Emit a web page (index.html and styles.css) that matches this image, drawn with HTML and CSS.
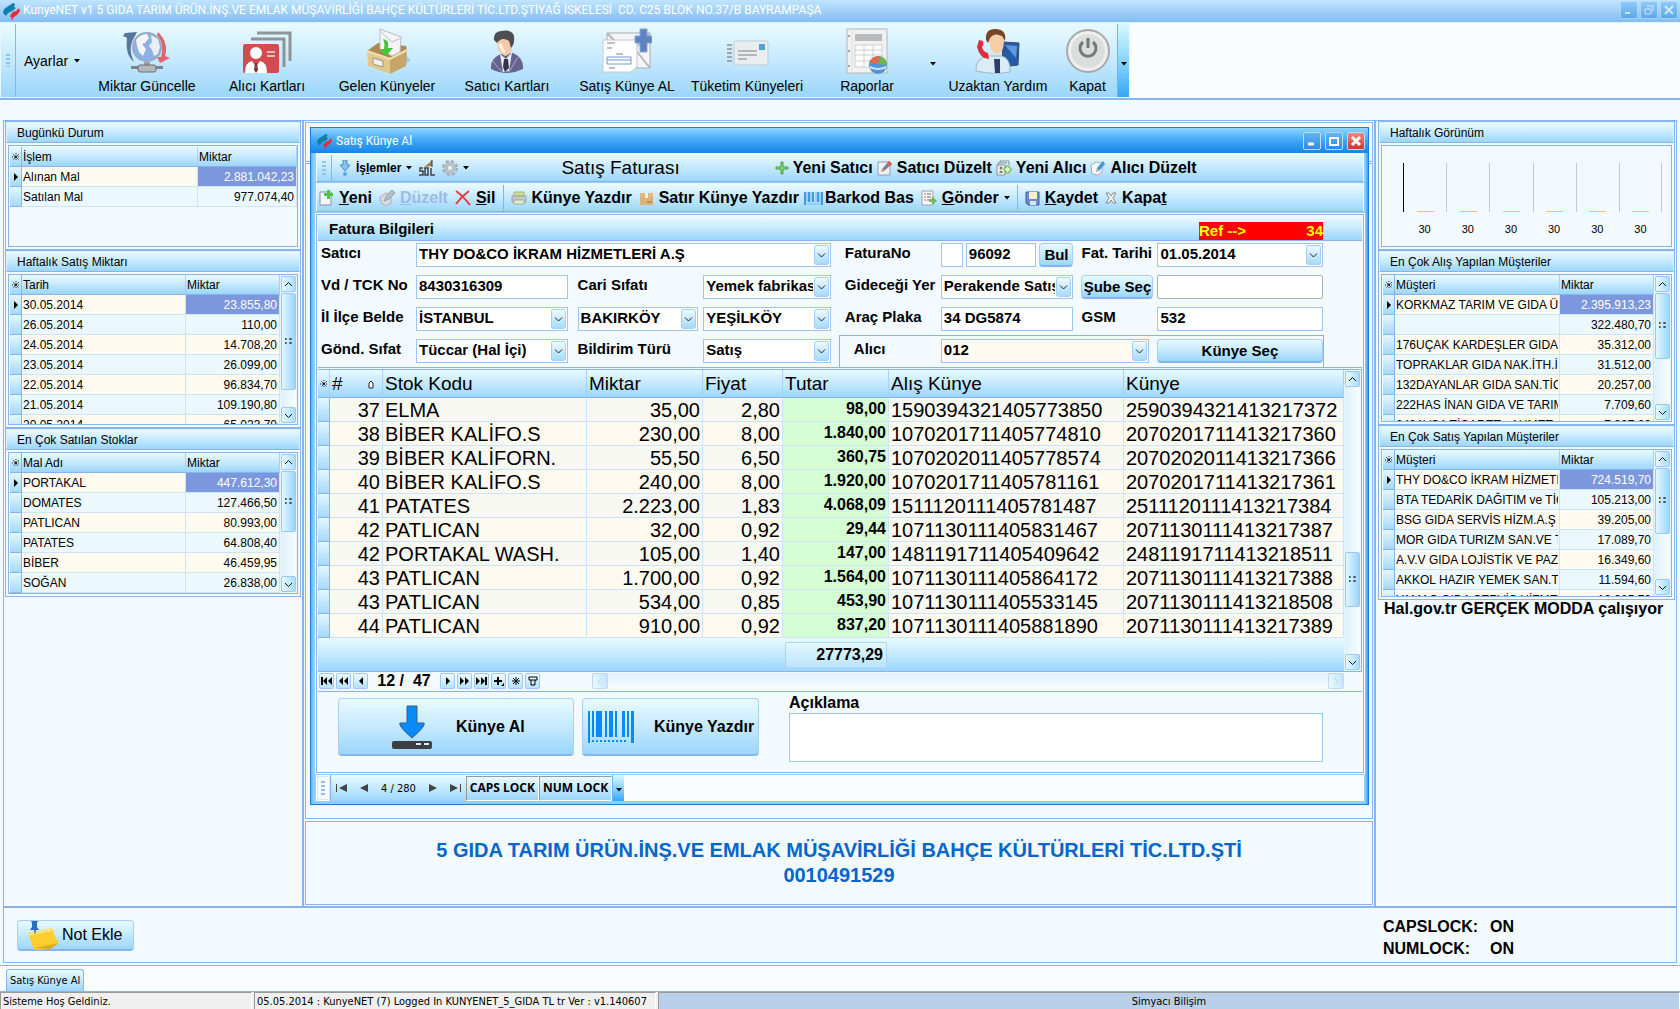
FILE: index.html
```html
<!DOCTYPE html>
<html lang="tr">
<head>
    <meta charset="UTF-8">
    <meta name="viewport" content="width=device-width, initial-scale=1.0">
    <title>KunyeNET v1</title>
    <link rel="stylesheet" href="styles.css">
</head>
<body>
    <!-- shared shapes -->
    <svg class="defs" width="0" height="0" aria-hidden="true">
        <symbol id="logo" viewBox="0 0 18 18">
            <path d="M1 11Q1 7 5 5L11 1L13 2L12 5L14 6Q10 10 6 11L4 14Z" fill="#0d7fae"/>
            <path d="M8 15L9 12Q11 9 14 9L17 6L18 9Q16 13 12 15L10 18L9 17L10 15Z" fill="#ee2a34"/>
        </symbol>
        <symbol id="star" viewBox="0 0 8 8">
            <path d="M4 0V8M0 4H8M1 1L7 7M7 1L1 7" stroke="#222" stroke-width="1" stroke-dasharray="1 1" fill="none"/>
            <rect x="3" y="3" width="2" height="2" fill="#222"/>
        </symbol>
        <symbol id="up" viewBox="0 0 9 9"><path d="M1 6L4.500 2.500L8 6" stroke="#111" fill="none"/></symbol>
        <symbol id="down" viewBox="0 0 9 9"><path d="M1 3L4.500 6.500L8 3" stroke="#111" fill="none"/></symbol>
        <symbol id="grip" viewBox="0 0 8 8"><path d="M0 1h3M5 1h3M0 5h3M5 5h3M0 0v3M5 0v3M0 4v3M5 4v3" stroke="#222" stroke-dasharray="2 1" fill="none"/></symbol>
        <symbol id="play" viewBox="0 0 6 8"><path d="M1 0L5 4L1 8Z" fill="#000"/></symbol>
        <symbol id="drop" viewBox="0 0 6 4"><path d="M0 0H6L3 3.500Z" fill="#000"/></symbol>
    </svg>

    <header class="titlebar">
        <svg class="logo" width="18" height="18"><use href="#logo"/></svg>
        <span class="title-text">KunyeNET v1 5 GIDA TARIM ÜRÜN.İNŞ.VE EMLAK MÜŞAVİRLİĞİ BAHÇE KÜLTÜRLERİ TİC.LTD.ŞTİYAĞ İSKELESİ&nbsp; CD. C25 BLOK NO.37/B BAYRAMPAŞA</span>
        <button class="win-btn faded" aria-label="Küçült"><svg width="10" height="10"><path d="M1 8H6" stroke="#fff" stroke-width="2"/></svg></button>
        <button class="win-btn faded" aria-label="Geri yükle"><svg width="10" height="10"><path d="M3 1H9V6M1 4H7V9H1Z" stroke="#fff" fill="none"/></svg></button>
        <button class="win-btn faded" aria-label="Kapat"><svg width="10" height="10"><path d="M1 1L9 9M9 1L1 9" stroke="#fff" stroke-width="2"/></svg></button>
    </header>

    <nav class="ribbon">
        <div class="ribbon-bar">
            <span class="dots"></span>
            <button class="ayarlar">Ayarlar <svg width="6" height="4"><use href="#drop"/></svg></button>
            <button class="big">
                <svg width="50" height="44" viewBox="0 0 50 44">
                    <path d="M3 3L15 2L13 6Q5 18 12 32Q3 25 5 8L1 6Z" fill="#58759c"/>
                    <path d="M36 2Q47 13 43 26L48 28L38 33L35 27L39 27Q43 14 35 5Z" fill="#e0646a"/>
                    <circle cx="25" cy="17" r="15" fill="#9aa8bb"/>
                    <circle cx="25" cy="17" r="13.500" fill="#8db1e4"/>
                    <path d="M14 10Q18 4 25 4L27 8L23 13L20 14L24 19L21 26L17 22L15 16Z" fill="#f2f6fb"/>
                    <path d="M29 5L36 9L38 17L36 24L32 26L30 20L27 16L30 12Z" fill="#e6eef8"/>
                    <path d="M22 32H28V37H22Z" fill="#9b9ea2"/>
                    <path d="M9 36H18V39H9ZM32 36H41V39H32Z" fill="#7f8387"/>
                    <rect x="16" y="35" width="18" height="7" rx="2" fill="#b3b6ba" stroke="#6d7074"/>
                </svg>
                Miktar Güncelle
            </button>
            <button class="big">
                <svg width="50" height="44" viewBox="0 0 50 44">
                    <path d="M15 3H48V31" stroke="#8f9498" stroke-width="3" fill="none"/>
                    <path d="M9 9H42V37" stroke="#8f9498" stroke-width="3" fill="none"/>
                    <rect x="1" y="14" width="36" height="29" rx="2" fill="#d14b4f"/>
                    <circle cx="14" cy="23" r="6" fill="#fff"/>
                    <path d="M3 43Q3 32 10 31L14 37L18 31Q25 32 25 43Z" fill="#fff"/>
                    <path d="M13 33H15L16 40L14 43L12 40Z" fill="#7b3b3e"/>
                    <path d="M25 22H33M25 26H33" stroke="#f2b9ba" stroke-width="2"/>
                </svg>
                Alıcı Kartları
            </button>
            <button class="big">
                <svg width="50" height="46" viewBox="0 0 50 46">
                    <path d="M30 45L49 32L41 25Z" fill="#8bb5d5" opacity=".6"/>
                    <path d="M5 23L16 15L44 18L45 22L28 30Z" fill="#a88a52"/>
                    <path d="M18 1L39 9L38 24L30 28L18 21Z" fill="#f4f5f7" stroke="#c3b9c2"/>
                    <path d="M18 3L30 14L39 10" stroke="#b9bec7" fill="none"/>
                    <path d="M21 11Q28 12 26 20H31L24 28L18 21H22Q23 15 21 11Z" fill="#45c53a"/>
                    <path d="M5 23L28 31V46L6 38Z" fill="#e3c88c"/>
                    <path d="M28 31L45 22L44 38L28 46Z" fill="#c7a768"/>
                    <path d="M5 23L28 31L45 22" stroke="#f2dfae" stroke-width="2" fill="none"/>
                    <path d="M11 30L21 33V39L11 36Z" fill="#f0f1ee" stroke="#9a9786"/>
                </svg>
                Gelen Künyeler
            </button>
            <button class="big">
                <svg width="40" height="44" viewBox="0 0 40 44">
                    <path d="M4 39Q3 28 14 24L26 23Q37 28 36 39Q20 47 4 39Z" fill="#65648e"/>
                    <path d="M13 24L19 29L25 22L22 41L16 42Z" fill="#eceff6"/>
                    <path d="M17 29H21L22 38L18 42L16 37Z" fill="#34344a"/>
                    <path d="M6 31Q11 39 16 42M31 27L22 42" stroke="#a8a7c5" fill="none"/>
                    <path d="M12 9Q17 4 24 8L25 17Q24 25 18 26Q10 22 10 14Z" fill="#f3c9a8"/>
                    <path d="M7 10Q6 2 14 1Q25 -1 27 6Q28 14 24 18L22 11Q15 6 10 13Z" fill="#4d4e51"/>
                    <path d="M13 14Q15 20 18 22" stroke="#fff3e5" stroke-width="3" fill="none"/>
                </svg>
                Satıcı Kartları
            </button>
            <button class="big">
                <svg width="50" height="46" viewBox="0 0 50 46">
                    <path d="M5 5H48V40H5Z" fill="#f5f5f6" stroke="#a9acb1"/>
                    <path d="M5 5L26 27L48 5M48 40L32 20" stroke="#b6b8bd" stroke-width="2" fill="none"/>
                    <path d="M1 12H35V39L29 44H1Z" fill="#fdfdfd" stroke="#c5c9cf"/>
                    <path d="M5 15H13M5 20H10M14 26H21M7 40H13" stroke="#7d8188" stroke-width="1"/>
                    <path d="M5 29H29V36H5ZM5 32H29" stroke="#7798d6" fill="none"/>
                    <path d="M38 1H45V8H50V15H45V24H38V15H33V8H38Z" fill="#5e83c1" stroke="#86a6d8"/>
                </svg>
                Satış Künye AL
            </button>
            <button class="big">
                <svg width="44" height="44" viewBox="0 0 44 44">
                    <path d="M2 15H7M2 19H7M2 23H7M2 27H7M2 31H7" stroke="#9fa6ac" stroke-width="2"/>
                    <rect x="9" y="11" width="34" height="24" rx="2" fill="#e9edf0" stroke="#c0cbd3"/>
                    <path d="M13 21H32M13 25H32M13 29H22" stroke="#b4b7b9" stroke-width="2"/>
                    <rect x="34" y="14" width="6" height="6" fill="#53a4d2"/>
                </svg>
                Tüketim Künyeleri
            </button>
            <button class="big">
                <svg width="44" height="46" viewBox="0 0 44 46">
                    <path d="M2 1H42V45H2Z" fill="#f1f1f1" stroke="#b5b6b8"/>
                    <path d="M7 1V45" stroke="#dddedf"/>
                    <circle cx="4" cy="8" r="1" fill="#888"/><circle cx="4" cy="23" r="1" fill="#888"/><circle cx="4" cy="38" r="1" fill="#888"/>
                    <rect x="10" y="6" width="27" height="7" fill="#b9babb"/>
                    <path d="M10 17H37V39H10ZM10 22H37M10 27H37M10 33H37M19 17V39M28 17V39" stroke="#cecfd0" fill="#fcfcfc"/>
                    <circle cx="33" cy="37" r="9" fill="#4f93de"/>
                    <path d="M33 36L24 35Q26 28 35 28Z" fill="#df6b4d"/>
                    <path d="M33 36L36 28Q42 31 42 37Z" fill="#6eb64b"/>
                    <path d="M25 39Q33 43 41 39" stroke="#cfe4fa" stroke-width="2" fill="none"/>
                </svg>
                Raporlar
            </button>
            <button class="split" aria-label="Rapor listesi"><svg width="6" height="4"><use href="#drop"/></svg></button>
            <button class="big">
                <svg width="46" height="46" viewBox="0 0 46 46">
                    <path d="M28 14L44 15L43 37L27 39Z" fill="#245ca9" stroke="#3b4a66"/>
                    <path d="M30 17L42 18L41 30Z" fill="#5b98dc"/>
                    <path d="M1 43Q0 31 12 28H27Q36 31 35 44Q18 47 1 43Z" fill="#dcebf4" stroke="#98b7c9"/>
                    <path d="M19 31H25V45H20Z" fill="#2d3e6b"/>
                    <path d="M14 9Q14 3 22 3Q29 4 29 12Q29 25 22 26Q14 24 14 9Z" fill="#f5cda8"/>
                    <path d="M11 12Q10 1 20 1Q32 1 30 13L27 8Q19 4 15 10L13 15Z" fill="#774426"/>
                    <path d="M4 12L8 13Q9 17 7 19Q8 24 13 25L14 31Q5 31 2 19Z" fill="#e02c3b"/>
                </svg>
                Uzaktan Yardım
            </button>
            <button class="big kapat">
                <svg width="46" height="46" viewBox="0 0 46 46">
                    <circle cx="23" cy="23" r="22" fill="#a7a8a9"/>
                    <circle cx="23" cy="23" r="20" fill="#efefef"/>
                    <circle cx="23" cy="23" r="17" fill="#dcdddd"/>
                    <path d="M18 14A8 8 0 1 0 28 14M23 10V20" stroke="#76797c" stroke-width="3" fill="none"/>
                </svg>
                Kapat
            </button>
            <button class="more" aria-label="Diğer"><svg width="6" height="4"><use href="#drop"/></svg></button>
        </div>
    </nav>

    <main class="workspace">
        <aside class="side">
            <section class="group">
                <h2>Bugünkü Durum</h2>
                <div class="frame short">
                    <table class="mini">
                        <colgroup><col class="c-sel"><col><col class="c-wide"></colgroup>
                        <tr><th><svg width="8" height="8"><use href="#star"/></svg></th><th>İşlem</th><th>Miktar</th></tr>
                        <tr><td class="sel"><svg width="6" height="8"><use href="#play"/></svg></td><td>Alınan Mal</td><td class="num active">2.881.042,23</td></tr>
                        <tr><td class="sel"></td><td>Satılan Mal</td><td class="num">977.074,40</td></tr>
                    </table>
                </div>
            </section>
            <section class="group">
                <h2>Haftalık Satış Miktarı</h2>
                <div class="frame tall">
                    <table class="mini">
                        <colgroup><col class="c-sel"><col><col class="c-num"></colgroup>
                        <tr><th><svg width="8" height="8"><use href="#star"/></svg></th><th>Tarih</th><th>Miktar</th></tr>
                        <tr><td class="sel"><svg width="6" height="8"><use href="#play"/></svg></td><td>30.05.2014</td><td class="num active">23.855,80</td></tr>
                        <tr><td class="sel"></td><td>26.05.2014</td><td class="num">110,00</td></tr>
                        <tr><td class="sel"></td><td>24.05.2014</td><td class="num">14.708,20</td></tr>
                        <tr><td class="sel"></td><td>23.05.2014</td><td class="num">26.099,00</td></tr>
                        <tr><td class="sel"></td><td>22.05.2014</td><td class="num">96.834,70</td></tr>
                        <tr><td class="sel"></td><td>21.05.2014</td><td class="num">109.190,80</td></tr>
                        <tr><td class="sel"></td><td>20.05.2014</td><td class="num">65.023,70</td></tr>
                    </table>
                    <div class="vscroll">
                        <button aria-label="Yukarı"><svg width="9" height="9"><use href="#up"/></svg></button>
                        <div class="track"><div class="thumb thumb-l"><svg width="8" height="8"><use href="#grip"/></svg></div></div>
                        <button aria-label="Aşağı"><svg width="9" height="9"><use href="#down"/></svg></button>
                    </div>
                </div>
            </section>
            <section class="group">
                <h2>En Çok Satılan Stoklar</h2>
                <div class="frame medium">
                    <table class="mini">
                        <colgroup><col class="c-sel"><col><col class="c-num"></colgroup>
                        <tr><th><svg width="8" height="8"><use href="#star"/></svg></th><th>Mal Adı</th><th>Miktar</th></tr>
                        <tr><td class="sel"><svg width="6" height="8"><use href="#play"/></svg></td><td>PORTAKAL</td><td class="num active">447.612,30</td></tr>
                        <tr><td class="sel"></td><td>DOMATES</td><td class="num">127.466,50</td></tr>
                        <tr><td class="sel"></td><td>PATLICAN</td><td class="num">80.993,00</td></tr>
                        <tr><td class="sel"></td><td>PATATES</td><td class="num">64.808,40</td></tr>
                        <tr><td class="sel"></td><td>BİBER</td><td class="num">46.459,95</td></tr>
                        <tr><td class="sel"></td><td>SOĞAN</td><td class="num">26.838,00</td></tr>
                    </table>
                    <div class="vscroll">
                        <button aria-label="Yukarı"><svg width="9" height="9"><use href="#up"/></svg></button>
                        <div class="track"><div class="thumb thumb-m"><svg width="8" height="8"><use href="#grip"/></svg></div></div>
                        <button aria-label="Aşağı"><svg width="9" height="9"><use href="#down"/></svg></button>
                    </div>
                </div>
            </section>
        </aside>

        <div class="center">
            <div class="mdi-strip"></div>
            <div class="mdi-body">
                <section class="window">
                    <header class="window-title">
                        <svg width="16" height="18" viewBox="0 0 18 18"><use href="#logo"/></svg>
                        <span>Satış Künye Al</span>
                        <button class="win-btn" aria-label="Küçült"><svg width="12" height="12"><path d="M2 9H8" stroke="#fff" stroke-width="3"/></svg></button>
                        <button class="win-btn" aria-label="Büyüt"><svg width="12" height="12"><path d="M2 3H10V10H2Z" stroke="#fff" stroke-width="2" fill="none"/></svg></button>
                        <button class="win-btn red" aria-label="Kapat"><svg width="12" height="12"><path d="M2 2L10 10M10 2L2 10" stroke="#fff" stroke-width="3"/></svg></button>
                    </header>

                    <div class="toolbar">
                        <span class="dots"></span>
                        <button class="tool small">
                            <svg width="12" height="17"><path d="M4 0H8V5H11L6 11L1 5H4Z" fill="#8cc1ec" stroke="#4b8fca"/><circle cx="6" cy="14" r="2" fill="#54a8e8"/></svg>
                            <span>İş<u>l</u>emler</span>
                            <svg width="6" height="4"><use href="#drop"/></svg>
                        </button>
                        <button class="tool small" aria-label="SQL">
                            <svg width="16" height="16" viewBox="0 0 16 16"><path d="M4 8H1V11H4V15H0M6 8H9V15H6ZM12 8V15H16" stroke="#444" stroke-width="1.500" fill="none"/><path d="M5 7L10 3L13 0L13 6Z" fill="#a78145"/><path d="M13 0V7" stroke="#333"/></svg>
                        </button>
                        <button class="tool small" aria-label="Seçenekler">
                            <svg width="16" height="16" viewBox="0 0 16 16"><circle cx="8" cy="8" r="6" fill="none" stroke="#a4acb3" stroke-width="4" stroke-dasharray="3 1.700"/><circle cx="8" cy="8" r="6" fill="#b9c1c8"/><circle cx="8" cy="8" r="2" fill="#e8f6ff"/></svg>
                            <svg width="6" height="4"><use href="#drop"/></svg>
                        </button>
                        <h1>Satış Faturası</h1>
                        <div class="contacts">
                            <button class="tool">
                                <svg width="14" height="14" viewBox="0 0 14 14"><path d="M6 1H8V6H13V8H8V13H6V8H1V6H6Z" fill="#8edb80" stroke="#459e3b"/></svg>
                                Yeni Satıcı
                            </button>
                            <button class="tool">
                                <svg width="16" height="16" viewBox="0 0 16 16"><path d="M1 2H13V15H1Z" fill="#eef1f8" stroke="#949bb0"/><path d="M4 12L5 9L12 1L15 4L7 11Z" fill="#7e8396"/><path d="M12 1L15 4L13 6L10 3Z" fill="#e45c42"/><path d="M4 12L5 9L7 11Z" fill="#e8b95c"/></svg>
                                Satıcı Düzelt
                            </button>
                            <button class="tool">
                                <svg width="16" height="16" viewBox="0 0 16 16"><path d="M4 3V1H13V5M2 5V3H11" stroke="#8b8f90" fill="none"/><path d="M1 5H9V15H1Z" fill="#f2f2ec" stroke="#8b8f90"/><circle cx="5" cy="8" r="1.500" fill="#777"/><path d="M3 13Q5 8 7 13Z" fill="#777"/><path d="M10 6H13V8H15V11H13V13H10V11H8V8H10Z" fill="#e6f8cf" stroke="#6db238"/></svg>
                                Yeni Alıcı
                            </button>
                            <button class="tool">
                                <svg width="16" height="16" viewBox="0 0 16 16"><path d="M1 5L6 2L12 3V12L8 15L2 14Z" fill="#f5f6f8" stroke="#a5acb5"/><path d="M6 12L7 8L13 1L15 4L9 11Z" fill="#3d97de"/><path d="M6 12L7 8L9 11Z" fill="#e2c797"/></svg>
                                Alıcı Düzelt
                            </button>
                        </div>
                    </div>

                    <div class="toolbar">
                        <button class="tool">
                            <svg width="15" height="16" viewBox="0 0 15 16"><path d="M1 2H12V15H1Z" fill="#f5f8fb" stroke="#7d93a8"/><path d="M8 0H11V3H14V6H11V9H8V6H5V3H8Z" fill="#55c544"/></svg>
                            <span><u>Y</u>eni</span>
                        </button>
                        <button class="tool disabled" disabled>
                            <svg width="16" height="16" viewBox="0 0 16 16"><path d="M1 7L7 3L12 5V13L7 16L2 13Z" fill="#d6dbdf" stroke="#a5b0b9"/><path d="M5 11L8 5L13 0L16 3L10 9Z" fill="#b3bec7" stroke="#95a3af"/></svg>
                            <span><u>D</u>üzelt</span>
                        </button>
                        <button class="tool">
                            <svg width="16" height="16" viewBox="0 0 16 16"><path d="M1 1Q8 6 15 15M14 1Q6 7 1 14" stroke="#e8393e" stroke-width="2" fill="none"/></svg>
                            <span><u>S</u>il</span>
                        </button>
                        <span class="sep"></span>
                        <button class="tool">
                            <svg width="16" height="16" viewBox="0 0 16 16"><path d="M3 2H13V6H3Z" fill="#cfe08a" stroke="#a5b976"/><path d="M1 6H15V12H1Z" fill="#c4c8cd" stroke="#9ba2aa"/><path d="M3 10H13V14H3Z" fill="#e4efd0" stroke="#a3ad8b"/></svg>
                            Künye Yazdır
                        </button>
                        <button class="tool">
                            <svg width="15" height="15" viewBox="0 0 15 15"><path d="M1 2H14V14H1Z" fill="#dcb27b"/><path d="M1 2H14V6H1Z" fill="#e0b885"/><path d="M6 2H9V7H6Z" fill="#fbf1df"/><path d="M8 11H13" stroke="#8d6c43"/></svg>
                            Satır Künye Yazdır
                        </button>
                        <button class="tool tight">
                            <svg width="19" height="14" viewBox="0 0 19 14"><path d="M1 1V14M5 1V11M9 1V11M14 1V11M18 1V14" stroke="#3b9be8" stroke-width="2"/><path d="M3 1V11M7 1V11M12 1V11M16 1V11M3 13H17" stroke="#73b8ef"/></svg>
                            Barkod Bas
                        </button>
                        <button class="tool">
                            <svg width="16" height="16" viewBox="0 0 16 16"><path d="M1 1H12V15H1Z" fill="#fbfbfb" stroke="#9aa1a8"/><path d="M3 4H5M3 7H5M3 10H5" stroke="#c55" stroke-width="1"/><path d="M6 4H10M6 7H10M6 10H9" stroke="#666"/><path d="M8 9H11V6L16 11L11 15V12H8Z" fill="#74b662"/></svg>
                            <span><u>G</u>önder</span>
                            <svg width="6" height="4"><use href="#drop"/></svg>
                        </button>
                        <span class="sep"></span>
                        <button class="tool">
                            <svg width="15" height="15" viewBox="0 0 15 15"><path d="M1 1H14V14H3L1 12Z" fill="#6b8bd0" stroke="#415da0"/><path d="M4 1H12V8H4Z" fill="#f6f1c4"/><path d="M5 10H11V14H5Z" fill="#dbe2ef"/></svg>
                            <span><u>K</u>aydet</span>
                        </button>
                        <button class="tool">
                            <svg width="12" height="12" viewBox="0 0 12 12"><path d="M1 1H4L6 4L8 1H11L8 6L11 11H8L6 8L4 11H1L4 6Z" fill="#f1f3f4" stroke="#81898f"/></svg>
                            <span>Kapa<u>t</u></span>
                        </button>
                    </div>

                    <div class="content">
                        <div class="content-title">
                            <h2>Fatura Bilgileri</h2>
                            <div class="ref"><span>Ref --&gt;</span><span>34</span></div>
                        </div>

                        <form class="fields">
                            <label for="satici">Satıcı</label>
                            <select id="satici" class="s5"><option>THY DO&amp;CO İKRAM HİZMETLERİ A.Ş</option></select>
                            <label class="c8" for="faturano">FaturaNo</label>
                            <div class="no-group">
                                <input class="seri" type="text" aria-label="Seri">
                                <input id="faturano" type="text" value="96092">
                                <button class="btn" type="button">Bul</button>
                            </div>
                            <label class="c11" for="tarih">Fat. Tarihi</label>
                            <select id="tarih"><option>01.05.2014</option></select>

                            <label for="tck">Vd / TCK No</label>
                            <input id="tck" type="text" value="8430316309">
                            <label class="c4" for="cari">Cari Sıfatı</label>
                            <select id="cari" class="c6"><option>Yemek fabrikas</option></select>
                            <label class="c8" for="yer">Gideceği Yer</label>
                            <select id="yer"><option>Perakende Satış</option></select>
                            <button class="btn c11 sube" type="button">Şube Seç</button>
                            <input class="grey" type="text" aria-label="Şube">

                            <label for="il">İl İlçe Belde</label>
                            <select id="il"><option>İSTANBUL</option></select>
                            <select class="c4" aria-label="İlçe"><option>BAKIRKÖY</option></select>
                            <select class="c6" aria-label="Belde"><option>YEŞİLKÖY</option></select>
                            <label class="c8" for="plaka">Araç Plaka</label>
                            <input id="plaka" type="text" value="34 DG5874">
                            <label class="c11" for="gsm">GSM</label>
                            <input id="gsm" type="text" value="532">

                            <label for="sifat">Gönd. Sıfat</label>
                            <select id="sifat"><option>Tüccar (Hal İçi)</option></select>
                            <label class="c4" for="tur">Bildirim Türü</label>
                            <select id="tur" class="c6"><option>Satış</option></select>
                            <div class="alici">
                                <label for="alici">Alıcı</label>
                                <select id="alici" class="cream"><option>012</option></select>
                                <button class="btn" type="button">Künye Seç</button>
                            </div>
                        </form>

                        <div class="grid-wrap">
                            <div class="grid-main">
                                <table class="grid">
                                    <colgroup><col class="g-sel"><col class="g-no"><col class="g-stok"><col class="g-mik"><col class="g-fiy"><col class="g-tut"><col class="g-alis"><col></colgroup>
                                    <thead>
                                        <tr><th><svg width="8" height="8"><use href="#star"/></svg></th>
                                            <th class="sorted"># <svg width="6" height="9"><path d="M1 8V3L3 1L5 3V8Z" fill="#fff" stroke="#222"/></svg></th>
                                            <th>Stok Kodu</th><th>Miktar</th><th>Fiyat</th><th>Tutar</th><th>Alış Künye</th><th>Künye</th></tr>
                                    </thead>
                                    <tbody>
                                        <tr><td class="sel"></td><td class="num">37</td><td>ELMA</td><td class="num">35,00</td><td class="num">2,80</td><td class="tutar">98,00</td><td>1590394321405773850</td><td>2590394321413217372</td></tr>
                                        <tr><td class="sel"></td><td class="num">38</td><td>BİBER KALİFO.S</td><td class="num">230,00</td><td class="num">8,00</td><td class="tutar">1.840,00</td><td>1070201711405774810</td><td>2070201711413217360</td></tr>
                                        <tr><td class="sel"></td><td class="num">39</td><td>BİBER KALİFORN.</td><td class="num">55,50</td><td class="num">6,50</td><td class="tutar">360,75</td><td>1070202011405778574</td><td>2070202011413217366</td></tr>
                                        <tr><td class="sel"></td><td class="num">40</td><td>BİBER KALİFO.S</td><td class="num">240,00</td><td class="num">8,00</td><td class="tutar">1.920,00</td><td>1070201711405781161</td><td>2070201711413217361</td></tr>
                                        <tr><td class="sel"></td><td class="num">41</td><td>PATATES</td><td class="num">2.223,00</td><td class="num">1,83</td><td class="tutar">4.068,09</td><td>1511120111405781487</td><td>2511120111413217384</td></tr>
                                        <tr><td class="sel"></td><td class="num">42</td><td>PATLICAN</td><td class="num">32,00</td><td class="num">0,92</td><td class="tutar">29,44</td><td>1071130111405831467</td><td>2071130111413217387</td></tr>
                                        <tr><td class="sel"></td><td class="num">42</td><td>PORTAKAL WASH.</td><td class="num">105,00</td><td class="num">1,40</td><td class="tutar">147,00</td><td>1481191711405409642</td><td>2481191711413218511</td></tr>
                                        <tr><td class="sel"></td><td class="num">43</td><td>PATLICAN</td><td class="num">1.700,00</td><td class="num">0,92</td><td class="tutar">1.564,00</td><td>1071130111405864172</td><td>2071130111413217388</td></tr>
                                        <tr><td class="sel"></td><td class="num">43</td><td>PATLICAN</td><td class="num">534,00</td><td class="num">0,85</td><td class="tutar">453,90</td><td>1071130111405533145</td><td>2071130111413218508</td></tr>
                                        <tr><td class="sel"></td><td class="num">44</td><td>PATLICAN</td><td class="num">910,00</td><td class="num">0,92</td><td class="tutar">837,20</td><td>1071130111405881890</td><td>2071130111413217389</td></tr>
                                    </tbody>
                                    <tfoot>
                                        <tr><td colspan="5"></td><td><span class="total">27773,29</span></td><td colspan="2"></td></tr>
                                    </tfoot>
                                </table>
                            </div>
                            <div class="vscroll">
                                <button aria-label="Yukarı"><svg width="9" height="9"><use href="#up"/></svg></button>
                                <div class="track"><div class="thumb thumb-g"><svg width="8" height="8"><use href="#grip"/></svg></div></div>
                                <button aria-label="Aşağı"><svg width="9" height="9"><use href="#down"/></svg></button>
                            </div>
                        </div>

                        <div class="navigator">
                            <button aria-label="İlk"><svg width="11" height="8"><path d="M0 0H2V8H0ZM6 0V8L2 4ZM11 0V8L7 4Z"/></svg></button>
                            <button aria-label="Önceki sayfa"><svg width="9" height="8"><path d="M4 0V8L0 4ZM9 0V8L5 4Z"/></svg></button>
                            <button aria-label="Önceki"><svg width="6" height="8"><path d="M5 0V8L1 4Z"/></svg></button>
                            <span class="position">12 /&nbsp; 47</span>
                            <button aria-label="Sonraki"><svg width="6" height="8"><path d="M1 0V8L5 4Z"/></svg></button>
                            <button aria-label="Sonraki sayfa"><svg width="9" height="8"><path d="M0 0V8L4 4ZM5 0V8L9 4Z"/></svg></button>
                            <button aria-label="Son"><svg width="11" height="8"><path d="M0 0V8L4 4ZM5 0V8L9 4ZM9 0H11V8H9Z"/></svg></button>
                            <button aria-label="Ekle"><svg width="10" height="9"><path d="M3 0H5V3H8V5H5V8H3V5H0V3H3ZM10 6V9H7Z"/></svg></button>
                            <button aria-label="Yer imi"><svg width="8" height="8"><path d="M4 0V8M0 4H8M1 1L7 7M7 1L1 7" stroke="#000"/></svg></button>
                            <button aria-label="Filtre"><svg width="10" height="10"><path d="M1 1H9V4H1ZM3 4L3 9H7V4" fill="none" stroke="#000"/></svg></button>
                            <div class="hscroll">
                                <button aria-label="Sola" disabled><svg width="6" height="9"><path d="M5 1L1 4.500L5 8" stroke="#9cc8ee" fill="none"/></svg></button>
                                <button aria-label="Sağa" disabled><svg width="6" height="9"><path d="M1 1L5 4.500L1 8" stroke="#9cc8ee" fill="none"/></svg></button>
                            </div>
                        </div>

                        <div class="actions">
                            <button class="btn action al">
                                <svg width="42" height="44" viewBox="0 0 42 44"><path d="M16 1H26V18H33Q35 21 21 33Q7 21 9 18H16Z" fill="#078bfa" stroke="#3c5f80"/><rect x="1" y="36" width="40" height="8" rx="2" fill="#3d3f42"/><path d="M25 39H30M33 39H38" stroke="#d8e9f5" stroke-width="2"/></svg>
                                Künye Al
                            </button>
                            <button class="btn action yazdir">
                                <svg width="46" height="32" viewBox="0 0 46 32"><path d="M0 0H2V32H0ZM4 0H6V26H4ZM8 0H14V26H8ZM17 0H19V26H17ZM21 0H25V26H21ZM27 0H29V26H27ZM34 0H37V26H34ZM39 0H41V26H39ZM43 0H46V32H43Z" fill="#078bfa"/><path d="M4 30H40" stroke="#078bfa" stroke-width="2" stroke-dasharray="2 2"/></svg>
                                Künye Yazdır
                            </button>
                            <div class="note">
                                <label for="aciklama">Açıklama</label>
                                <textarea id="aciklama"></textarea>
                            </div>
                        </div>
                    </div>

                    <div class="window-status">
                        <span class="dots"></span>
                        <div class="pager">
                            <button aria-label="İlk kayıt"><svg width="11" height="8"><path d="M0 0H1V8H0ZM11 0V8L3 4Z"/></svg></button>
                            <button aria-label="Önceki kayıt"><svg width="8" height="8"><path d="M8 0V8L0 4Z"/></svg></button>
                            <span>4 / 280</span>
                            <button aria-label="Sonraki kayıt"><svg width="8" height="8"><path d="M0 0V8L8 4Z"/></svg></button>
                            <button aria-label="Son kayıt"><svg width="11" height="8"><path d="M0 0V8L8 4ZM10 0H11V8H10Z"/></svg></button>
                        </div>
                        <span class="lock">CAPS LOCK</span>
                        <span class="lock">NUM LOCK</span>
                        <button class="more" aria-label="Diğer"><svg width="6" height="4"><use href="#drop"/></svg></button>
                    </div>
                </section>
            </div>
            <div class="company">
                <p>5 GIDA TARIM ÜRÜN.İNŞ.VE EMLAK MÜŞAVİRLİĞİ BAHÇE KÜLTÜRLERİ TİC.LTD.ŞTİ</p>
                <p>0010491529</p>
            </div>
        </div>

        <aside class="side right">
            <section class="group">
                <h2>Haftalık Görünüm</h2>
                <div class="frame short chart">
                    <div class="bar"><i></i><span>30</span></div>
                    <div class="bar"><i></i><span>30</span></div>
                    <div class="bar"><i></i><span>30</span></div>
                    <div class="bar"><i></i><span>30</span></div>
                    <div class="bar"><i></i><span>30</span></div>
                    <div class="bar"><i></i><span>30</span></div>
                </div>
            </section>
            <section class="group">
                <h2>En Çok Alış Yapılan Müşteriler</h2>
                <div class="frame mid">
                    <table class="mini">
                        <colgroup><col class="c-sel"><col><col class="c-num"></colgroup>
                        <tr><th><svg width="8" height="8"><use href="#star"/></svg></th><th>Müşteri</th><th>Miktar</th></tr>
                        <tr><td class="sel"><svg width="6" height="8"><use href="#play"/></svg></td><td><div>KORKMAZ TARIM VE GIDA ÜRÜN</div></td><td class="num active">2.395.913,23</td></tr>
                        <tr><td class="sel"></td><td></td><td class="num">322.480,70</td></tr>
                        <tr><td class="sel"></td><td><div>176UÇAK KARDEŞLER GIDA</div></td><td class="num">35.312,00</td></tr>
                        <tr><td class="sel"></td><td><div>TOPRAKLAR GIDA NAK.İTH.İHR</div></td><td class="num">31.512,00</td></tr>
                        <tr><td class="sel"></td><td><div>132DAYANLAR GIDA SAN.TİC</div></td><td class="num">20.257,00</td></tr>
                        <tr><td class="sel"></td><td><div>222HAS İNAN GIDA VE TARIM</div></td><td class="num">7.709,60</td></tr>
                        <tr><td class="sel"></td><td><div>249AVSA TİCARET - AHMET A</div></td><td class="num">7.397,00</td></tr>
                    </table>
                    <div class="vscroll">
                        <button aria-label="Yukarı"><svg width="9" height="9"><use href="#up"/></svg></button>
                        <div class="track"><div class="thumb thumb-s"><svg width="8" height="8"><use href="#grip"/></svg></div></div>
                        <button aria-label="Aşağı"><svg width="9" height="9"><use href="#down"/></svg></button>
                    </div>
                </div>
            </section>
            <section class="group">
                <h2>En Çok Satış Yapılan Müşteriler</h2>
                <div class="frame mid">
                    <table class="mini">
                        <colgroup><col class="c-sel"><col><col class="c-num"></colgroup>
                        <tr><th><svg width="8" height="8"><use href="#star"/></svg></th><th>Müşteri</th><th>Miktar</th></tr>
                        <tr><td class="sel"><svg width="6" height="8"><use href="#play"/></svg></td><td><div>THY DO&amp;CO İKRAM HİZMETLERİ</div></td><td class="num active">724.519,70</td></tr>
                        <tr><td class="sel"></td><td><div>BTA TEDARİK DAĞITIM ve TİC</div></td><td class="num">105.213,00</td></tr>
                        <tr><td class="sel"></td><td><div>BSG GIDA SERVİS HİZM.A.Ş</div></td><td class="num">39.205,00</td></tr>
                        <tr><td class="sel"></td><td><div>MOR GIDA TURIZM SAN.VE TİC</div></td><td class="num">17.089,70</td></tr>
                        <tr><td class="sel"></td><td><div>A.V.V GIDA LOJİSTİK VE PAZ.A.Ş</div></td><td class="num">16.349,60</td></tr>
                        <tr><td class="sel"></td><td><div>AKKOL HAZIR YEMEK SAN.TİC</div></td><td class="num">11.594,60</td></tr>
                        <tr><td class="sel"></td><td><div>YAMAÇ GIDA SERVİS HİZMET</div></td><td class="num">10.985,70</td></tr>
                    </table>
                    <div class="vscroll">
                        <button aria-label="Yukarı"><svg width="9" height="9"><use href="#up"/></svg></button>
                        <div class="track"><div class="thumb thumb-s"><svg width="8" height="8"><use href="#grip"/></svg></div></div>
                        <button aria-label="Aşağı"><svg width="9" height="9"><use href="#down"/></svg></button>
                    </div>
                </div>
            </section>
            <p class="mode">Hal.gov.tr GERÇEK MODDA çalışıyor</p>
        </aside>
    </main>

    <section class="bottom-panel">
        <button class="btn not-ekle">
            <svg width="32" height="30" viewBox="0 0 32 30"><path d="M1 13L25 8Q27 16 32 23L23 29L7 30Q4 21 1 13Z" fill="#f9ce2d"/><path d="M1 13L25 8L25 11L2 16Z" fill="#fbe27c"/><path d="M7 28L23 29L32 23Q18 26 7 28Z" fill="#e0a81c"/><path d="M4 1H11L10 3V7L12 10H9L8 15L7 10H3L5 7V3Z" fill="#2b6fb8"/></svg>
            Not Ekle
        </button>
        <dl class="keys">
            <dt>CAPSLOCK:</dt><dd>ON</dd>
            <dt>NUMLOCK:</dt><dd>ON</dd>
        </dl>
    </section>

    <div class="tabs"><button class="tab">Satış Künye Al</button></div>

    <footer class="statusbar">
        <span class="cell hello">Sisteme Hoş Geldiniz.</span>
        <span class="cell log">05.05.2014 : KunyeNET (7) Logged In KUNYENET_5_GIDA TL tr Ver : v1.140607</span>
        <span class="cell brand">Simyacı Bilişim</span>
    </footer>
</body>
</html>
```

FILE: styles.css
```css
:root {
    --line: #86b4ee;
    --soft: #cde5fb;
    --bg: #f2f9ff;
    --face: linear-gradient(#e9faff, #c5e9ff 50%, #9bd6fb);
}

* {
    box-sizing: border-box;
}

body {
    margin: 0;
    min-height: 100vh;
    display: flex;
    flex-direction: column;
    background: var(--bg);
    color: #000;
    font: 12px "Liberation Sans", Arial, sans-serif;
}

.defs {
    position: absolute;
}

h1, h2, p, dl, dd {
    margin: 0;
}

button {
    font: inherit;
    color: inherit;
    padding: 0;
    border: 0;
    background: none;
}

/* title bar */
.titlebar {
    display: flex;
    align-items: center;
    height: 22px;
    padding: 0 2px;
    background: linear-gradient(#bfe4ff, #84bdf2);
    color: #fff;
    font: 12px/16px Roboto, "Noto Sans", sans-serif;
}

.title-text {
    flex: 1;
    margin: -3px 0 0 3px;
    white-space: pre;
}

.win-btn {
    display: flex;
    align-items: center;
    justify-content: center;
    width: 18px;
    height: 18px;
    margin-left: 4px;
    border: 1px solid #b4dcfb;
    border-radius: 2px;
    background: linear-gradient(#67b4f4, #2b8be4);
}

.win-btn.faded {
    opacity: 0.5;
    margin: -2px 0 0 2px;
}

.win-btn.red {
    background: linear-gradient(#f08a80, #d8302c);
}

/* ribbon */
.ribbon {
    height: 78px;
    border-top: 1px solid #dff2ff;
    border-bottom: 2px solid var(--line);
    background: #f9fdff;
}

.ribbon-bar {
    display: inline-flex;
    align-items: stretch;
    height: 75px;
    border: 1px solid #e8f8ff;
    background: var(--face);
    font-size: 14px;
}

.dots {
    width: 15px;
    padding: 30px 5px;
    border-right: 1px solid var(--line);
    background: repeating-linear-gradient(#8fc2f2 0 2px, transparent 2px 4px) content-box;
}

.ayarlar {
    width: 71px;
    padding-left: 8px;
    text-align: left;
}

.ayarlar svg {
    margin: 0 0 3px 2px;
}

.big {
    display: flex;
    flex-direction: column;
    align-items: center;
    justify-content: flex-end;
    gap: 3px;
    width: 120px;
    padding-bottom: 2px;
    line-height: 18px;
    white-space: nowrap;
}

.kapat {
    width: 59px;
}

.split {
    width: 11px;
}

.more {
    width: 12px;
    border-left: 1px solid #6db3ee;
    background: linear-gradient(#d4fbff, #7cccfb 60%, #35a8f8);
}

/* work area */
.workspace {
    flex: 1;
    display: grid;
    grid-template-columns: 300px 1fr 302px;
    margin: 20px 3px 0;
    border: 1px solid var(--line);
    border-bottom: 0;
}

.side {
    padding: 0 1px;
    border-right: 2px solid var(--line);
}

.side.right {
    padding: 0 1px 0 2px;
    border-right: 0;
    border-left: 2px solid var(--line);
}

.group {
    padding: 0 2px 2px;
    border: 1px solid var(--line);
}

.group h2 {
    height: 21px;
    margin: 0 -2px 2px;
    padding-left: 10px;
    border: 1px solid #dff3ff;
    border-bottom: 1px solid var(--line);
    background: var(--face);
    font-size: 12px;
    font-weight: normal;
    line-height: 20px;
}

.frame {
    display: flex;
    align-items: flex-start;
    overflow: hidden;
    border: 1px solid var(--line);
}

.short { height: 102px; padding-top: 1px; }
.tall { height: 151px; }
.medium { height: 142px; }
.mid { height: 148px; }

table {
    border-collapse: separate;
    border-spacing: 0;
    table-layout: fixed;
}

.mini {
    flex: 1;
    width: 0;
    padding-left: 1px;
}

.c-sel { width: 12px; }
.c-num { width: 94px; }
.c-wide { width: 99px; }

.mini th, .mini td {
    height: 20px;
    padding: 0 2px 0 1px;
    overflow: hidden;
    white-space: nowrap;
    text-align: left;
    font-weight: normal;
    line-height: 18px;
    border-right: 1px solid var(--soft);
    border-bottom: 1px solid var(--soft);
}

.mini td div {
    margin-right: -1px;
    overflow: hidden;
}

th, .mini th {
    background: var(--face);
    border-right: 1px solid #a5d0f7;
    border-bottom: 1px solid var(--line);
}

.mini th:first-child, .mini td.sel {
    padding: 0;
    text-align: center;
    border-right-color: var(--line);
}

.mini td.sel, .grid td.sel {
    background: linear-gradient(#e3f7ff, #a4d9fb);
    border-bottom: 1px solid var(--line);
}

.mini tr:nth-child(even) td:not(.sel) { background: #fffaf0; }
.mini tr:nth-child(odd) td:not(.sel) { background: #ebf9ff; }

.mini .num, .grid .num {
    text-align: right;
}

.mini tr:nth-child(even) td.num.active {
    background: #7d97df;
    color: #fff;
}

/* scroll bars */
.vscroll {
    display: flex;
    flex-direction: column;
    align-self: stretch;
    width: 17px;
    padding: 1px;
    background: #e6f5ff;
}

.vscroll button, .hscroll button {
    display: flex;
    align-items: center;
    justify-content: center;
    height: 16px;
    border: 1px solid #9cc8f5;
    border-radius: 2px;
    background: linear-gradient(90deg, #e9faff, #a9dcfc);
}

.track {
    flex: 1;
    padding-top: 1px;
    background: linear-gradient(90deg, #dff1fe, #f7fcff);
}

.thumb {
    display: flex;
    align-items: center;
    justify-content: center;
    border: 1px solid #9cc8f5;
    border-radius: 2px;
    background: linear-gradient(90deg, #e3f7ff, #9bd6fb);
}

.thumb-l { height: 97px; }
.thumb-m { height: 61px; }
.thumb-s { height: 66px; }
.thumb-g { height: 55px; margin-top: 164px; }

/* weekly chart */
.chart {
    padding: 17px 9px 0 21px;
}

.bar {
    flex: 1;
    display: flex;
    flex-direction: column;
    align-items: center;
    font-size: 11px;
}

.bar i {
    align-self: stretch;
    height: 49px;
    border-left: 1px solid #c8c8c8;
    background: linear-gradient(#f8bd6a, #f8bd6a) center bottom / 17px 1px no-repeat;
}

.bar:first-child i {
    border-left-color: #000;
}

.bar:last-child i {
    border-right: 1px solid #c8c8c8;
}

.bar span {
    margin-top: 11px;
}

.mode {
    padding-left: 6px;
    font-size: 16px;
    font-weight: bold;
    line-height: 18px;
    white-space: nowrap;
}

/* center */
.center {
    display: flex;
    flex-direction: column;
    min-width: 0;
    padding: 1px;
}

.mdi-strip {
    height: 40px;
    border: 1px solid var(--line);
}

.mdi-body {
    flex: 1;
    margin-top: 1px;
    padding: 0 3px 13px 4px;
    border: 1px solid var(--line);
}

.window {
    margin-top: -37px;
    padding: 0 4px 3px 5px;
    border: 1px solid #1b7fda;
    background: linear-gradient(90deg, #5bb8f8, #8fd0fa 3px, #8fd0fa calc(100% - 3px), #3b9bee);
}

.window-title {
    display: flex;
    align-items: center;
    height: 25px;
    margin: 0 -4px 0 -5px;
    padding: 0 3px 0 5px;
    background: linear-gradient(#8fd4ff, #3fa7f6 50%, #1784e8);
    color: #fff;
    font: 12px Roboto, "Noto Sans", sans-serif;
}

.window-title span {
    flex: 1;
    margin-left: 4px;
}

.toolbar {
    display: flex;
    align-items: center;
    gap: 7px;
    height: 29px;
    margin-bottom: 1px;
    padding: 1px 6px 0 0;
    border: 1px solid #e8f8ff;
    border-bottom-color: var(--line);
    background: var(--face);
    font-size: 16px;
    font-weight: bold;
}

.toolbar > .tool:first-child {
    margin-left: 2px;
}

.toolbar .dots, .window-status .dots {
    align-self: stretch;
    padding: 6px 5px;
}

.tool {
    display: flex;
    align-items: center;
    gap: 5px;
    white-space: nowrap;
}

.tool.small {
    font-size: 12px;
}

.tool.tight {
    gap: 2px;
    margin-left: -2px;
}

.contacts {
    display: flex;
    gap: 4px;
}

.contacts .tool {
    gap: 4px;
}

.disabled {
    color: #9dbbe4;
}

.toolbar h1 {
    margin: 0 88px 0 85px;
    font-size: 19px;
    font-weight: normal;
    white-space: nowrap;
}

.sep {
    width: 1px;
    align-self: stretch;
    background: var(--line);
}

.content {
    margin-top: 2px;
    padding: 2px 1px;
    border: 1px solid var(--line);
    outline: 1px solid #fff;
    background: var(--bg);
}

.content-title {
    display: flex;
    align-items: flex-end;
    justify-content: space-between;
    height: 24px;
    padding-right: 39px;
    border-bottom: 1px solid var(--line);
    background: var(--face);
}

.content-title h2 {
    padding-left: 11px;
    font-size: 15px;
    line-height: 23px;
}

.ref {
    display: flex;
    justify-content: space-between;
    width: 124px;
    background: #f00;
    color: #ff0;
    font-size: 15px;
    font-weight: bold;
    line-height: 18px;
}

.fields {
    display: grid;
    grid-template-columns: 95px 152fr 10px 121fr 5px 128fr 14px 96px 133fr 8px 76px 166fr;
    grid-auto-rows: 24px;
    row-gap: 8px;
    padding: 2px 39px 4px 3px;
    border-bottom: 1px solid var(--line);
    font-size: 15px;
    font-weight: bold;
}

.fields label {
    line-height: 20px;
    white-space: nowrap;
}

.s5 { grid-column: 2 / 7; }
.c4 { grid-column: 4; }
.c6 { grid-column: 6; }
.c8 { grid-column: 8; }
.c11 { grid-column: 11; }

input, select, textarea {
    min-width: 0;
    width: 100%;
    height: 24px;
    padding: 0 2px 3px;
    border: 1px solid #9cc5f0;
    border-radius: 0;
    background-color: #fff;
    color: #000;
    font: bold 15px "Liberation Sans", Arial, sans-serif;
}

select {
    appearance: none;
    padding-right: 17px;
    background-image: url("data:image/svg+xml,%3Csvg xmlns='http://www.w3.org/2000/svg' width='15' height='20'%3E%3Cdefs%3E%3ClinearGradient id='g' x2='0' y2='1'%3E%3Cstop stop-color='%23effbff'/%3E%3Cstop offset='1' stop-color='%23a2d9fc'/%3E%3C/linearGradient%3E%3C/defs%3E%3Crect x='.5' y='.5' width='14' height='19' rx='2' fill='url(%23g)' stroke='%23a5cdf5'/%3E%3Cpath d='M4 8.500L7.500 12L11 8.500' fill='none' stroke='%23223'/%3E%3C/svg%3E");
    background-repeat: no-repeat;
    background-position: right 1px center;
}

.grey {
    border-color: #adb0b5;
    border-radius: 2px;
}

.cream {
    background-color: #fffaf0;
}

.no-group {
    display: grid;
    grid-template-columns: 22px 1fr 34px;
    gap: 3px;
}

.btn {
    border: 1px solid #a5cff6;
    border-bottom: 2px solid var(--line);
    border-radius: 4px;
    background: var(--face);
    font-weight: bold;
    white-space: nowrap;
}

.sube {
    margin-right: 4px;
}

.alici {
    grid-column: 7 / 13;
    display: grid;
    grid-template-columns: 79px 208fr 166fr;
    column-gap: 8px;
    margin: -4px -1px -4px 8px;
    padding: 3px 0 0 14px;
    border: 1px solid var(--line);
    border-width: 1px 1px 0 1px;
}

.alici select, .alici .btn {
    height: 24px;
}

/* invoice lines */
.grid-wrap {
    display: flex;
    margin-top: 1px;
    border: 1px solid var(--line);
    border-left-width: 0;
}

.grid-main {
    flex: 1;
    min-width: 0;
}

.grid {
    width: 100%;
    font-size: 20px;
}

.g-sel { width: 12px; }
.g-no { width: 53px; }
.g-stok { width: 204px; }
.g-mik { width: 116px; }
.g-fiy { width: 80px; }
.g-tut { width: 106px; }
.g-alis { width: 235px; }

.grid th {
    height: 28px;
    padding: 0 2px;
    text-align: left;
    font-size: 19px;
    font-weight: normal;
    line-height: 26px;
}

.grid th:first-child {
    padding: 0;
    text-align: center;
}

.grid th:first-child svg {
    display: inline-block;
    vertical-align: middle;
}

.sorted svg {
    float: right;
    margin: 9px 6px 0 0;
}

.grid td {
    height: 24px;
    padding: 1px 2px 0 2px;
    line-height: 22px;
    white-space: nowrap;
    border-right: 1px solid var(--soft);
    border-bottom: 1px solid var(--soft);
}

.grid tbody tr:nth-child(odd) td { background: #f7f8f2; }
.grid tbody tr:nth-child(even) td { background: #fffaf0; }

.grid tbody tr td.sel {
    background: linear-gradient(#e3f7ff, #a4d9fb);
    border-right-color: var(--line);
}

.grid tbody tr td.tutar {
    padding: 0 2px 2px;
    background: #d4fdd4;
    text-align: right;
    font-size: 16px;
    font-weight: bold;
    line-height: 20px;
}

.grid tfoot td {
    height: 33px;
    padding: 0 2px;
    border-right: 0;
    border-bottom: 0;
    background: var(--face);
}

.total {
    display: block;
    height: 26px;
    padding-right: 3px;
    border: 1px solid #a9d3f7;
    border-radius: 2px;
    background: linear-gradient(#e3f7ff, #bce4fd);
    text-align: right;
    font-size: 16px;
    font-weight: bold;
    line-height: 24px;
}

.navigator {
    display: flex;
    align-items: center;
    gap: 2px;
    height: 20px;
    padding: 0 18px 1px 1px;
    border-bottom: 1px solid var(--line);
}

.navigator > button {
    display: flex;
    align-items: center;
    justify-content: center;
    width: 15px;
    height: 16px;
    border: 1px solid #9cc8f5;
    border-radius: 2px;
    background: linear-gradient(#eefbff, #b5e1fc);
}

.position {
    width: 68px;
    text-align: center;
    font-size: 16px;
    font-weight: bold;
}

.hscroll {
    flex: 1;
    display: flex;
    justify-content: space-between;
    margin-left: 50px;
    background: linear-gradient(#dff1fe, #f7fcff);
}

.hscroll button {
    width: 16px;
    opacity: 0.6;
}

.actions {
    display: flex;
    align-items: flex-start;
    gap: 8px;
    padding: 6px 39px 8px 20px;
}

.action {
    display: flex;
    align-items: center;
    height: 58px;
    font-size: 16px;
}

.al {
    width: 236px;
    padding-left: 52px;
    gap: 23px;
}

.yazdir {
    width: 177px;
    padding-left: 5px;
    gap: 20px;
}

.note {
    flex: 1;
    margin-left: 22px;
    font-size: 16px;
    font-weight: bold;
    line-height: 16px;
}

.note label {
    display: block;
    margin: -3px 0 2px;
}

textarea {
    display: block;
    height: 49px;
    resize: none;
}

.window-status {
    display: flex;
    align-items: stretch;
    height: 26px;
    margin-top: 2px;
    background: #f9fdff;
    font: 11px "DejaVu Sans Condensed", "Noto Sans", sans-serif;
}

.window-status .dots {
    outline: 1px solid #cfe9fd;
    outline-offset: -2px;
}

.pager {
    display: flex;
    align-items: center;
    gap: 13px;
    padding: 0 5px;
    background: var(--face);
}

.pager svg {
    fill: #444;
}

.lock {
    margin-top: 1px;
    padding: 0 3px;
    border: 1px solid #fff;
    border-top-color: #999;
    border-left-color: #999;
    background: var(--face);
    font: bold 12px/22px "Open Sans", "Noto Sans", sans-serif;
}

.company {
    margin-top: 2px;
    height: 84px;
    padding-top: 16px;
    border: 1px solid var(--line);
    color: #0566cc;
    text-align: center;
    font-size: 20px;
    font-weight: bold;
    line-height: 25px;
}

/* bottom */
.bottom-panel {
    display: flex;
    justify-content: space-between;
    align-items: flex-start;
    height: 57px;
    margin: 0 3px;
    padding: 12px 162px 0 13px;
    border: 1px solid var(--line);
    border-top-width: 2px;
}

.not-ekle {
    display: flex;
    align-items: center;
    gap: 3px;
    width: 117px;
    height: 31px;
    padding-left: 9px;
    font-size: 16px;
    font-weight: normal;
}

.keys {
    display: grid;
    grid-template-columns: 107px 24px;
    margin-top: -4px;
    font-size: 16px;
    font-weight: bold;
    line-height: 22px;
}

.tabs {
    height: 27px;
    margin-top: 2px;
    padding: 3px 6px 0;
    border-top: 1px solid var(--line);
    border-bottom: 1px solid var(--line);
    background: #f9fdff;
}

.tab {
    height: 22px;
    padding: 0 3px;
    border: 1px solid var(--line);
    border-bottom: 0;
    border-radius: 3px 3px 0 0;
    background: var(--face);
    font: 11px "DejaVu Sans Condensed", "Noto Sans", sans-serif;
}

.statusbar {
    display: flex;
    gap: 2px;
    height: 19px;
    background: #f0f0f0;
    font: 11px "DejaVu Sans Condensed", "Noto Sans", sans-serif;
}

.cell {
    padding: 0 2px;
    border: 1px solid #fff;
    border-top-color: #999;
    border-left-color: #999;
    line-height: 17px;
    white-space: nowrap;
}

.hello { width: 252px; }
.log { width: 402px; }

.brand {
    flex: 1;
    background: #b9cfea;
    text-align: center;
}
```
